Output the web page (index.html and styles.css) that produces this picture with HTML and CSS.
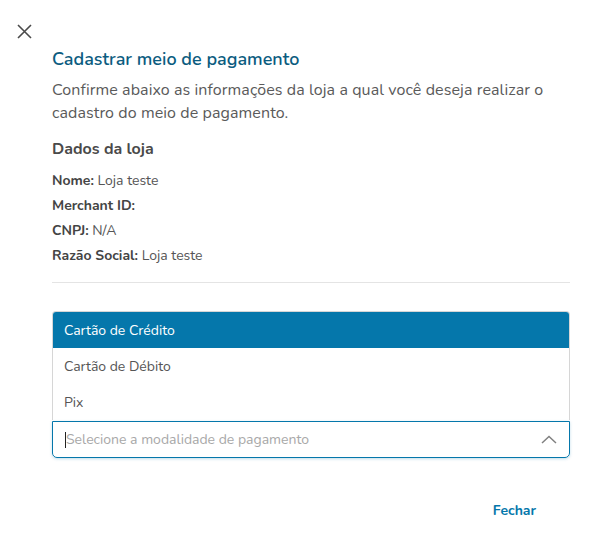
FILE: index.html
```html
<!DOCTYPE html>
<html lang="pt-BR">
<head>
<meta charset="utf-8">
<link rel="stylesheet" href="styles.css">
</head>
<body>
<div class="dialog">
  <button class="close" aria-label="Fechar">
    <svg width="15" height="15" viewBox="0 0 15 15"><path d="M1 1L14 14M14 1L1 14" stroke="#4a4a4a" stroke-width="1.6" fill="none"/></svg>
  </button>
  <div class="content">
    <h1 class="title">Cadastrar meio de pagamento</h1>
    <p class="desc">Confirme abaixo as informações da loja a qual você deseja realizar o cadastro do meio de pagamento.</p>
    <h2 class="subtitle">Dados da loja</h2>
    <ul class="fields">
      <li><b>Nome:</b> Loja teste</li>
      <li><b>Merchant ID:</b></li>
      <li><b>CNPJ:</b> N/A</li>
      <li><b>Razão Social:</b> Loja teste</li>
    </ul>
    <hr class="divider">
    <div class="select">
      <ul class="options">
        <li class="option active">Cartão de Crédito</li>
        <li class="option">Cartão de Débito</li>
        <li class="option">Pix</li>
      </ul>
      <div class="input">
        <span class="caret"></span><span class="placeholder">Selecione a modalidade de pagamento</span>
        <svg class="chevron" width="16" height="9" viewBox="0 0 16 9"><path d="M1 8L8 1.5L15 8" stroke="#808080" stroke-width="1.5" fill="none"/></svg>
      </div>
    </div>
    <div class="actions">
      <button class="btn-close">Fechar</button>
    </div>
  </div>
</div>
</body>
</html>
```
FILE: styles.css
```css
* { box-sizing: border-box; }
body {
  margin: 0;
  background: #fff;
  font-family: "Nunito", "Lato", "Open Sans", sans-serif;
  color: #555;
}
.dialog {
  padding-top: 24px;
}
.close {
  display: block;
  margin-left: 17px;
  padding: 0;
  border: 0;
  background: none;
  width: 15px;
  height: 15px;
  line-height: 0;
}
.content {
  padding: 0 39px 0 52px;
}
.title {
  margin: 8px 0 0;
  font-size: 18px;
  line-height: 24px;
  font-weight: 600;
  color: #0b5c80;
}
.desc {
  margin: 8px 0 0;
  font-size: 16px;
  line-height: 23px;
  letter-spacing: 0.09px;
  color: #5a5a5a;
}
.subtitle {
  margin: 12px 0 0;
  font-size: 16px;
  line-height: 24px;
  font-weight: 700;
  color: #4a4a4a;
}
.fields {
  list-style: none;
  margin: 6.5px 0 0;
  padding: 0;
  font-size: 14px;
  line-height: 25px;
  color: #555;
}
.fields b {
  font-weight: 700;
  color: #444;
}
.divider {
  margin: 14px 0 0;
  border: 0;
  border-top: 1px solid #e4e4e4;
  height: 0;
}
.select {
  margin-top: 28px;
}
.options {
  list-style: none;
  margin: 0;
  padding: 0;
  border: 1px solid #d6d6d6;
  border-bottom: 0;
  border-radius: 4px 4px 0 0;
  overflow: hidden;
}
.option {
  height: 36px;
  line-height: 36px;
  padding: 1px 0 0 11px;
  font-size: 14px;
  color: #555;
}
.option.active {
  background: #0577ab;
  color: #fff;
}
.input {
  display: flex;
  align-items: center;
  height: 37px;
  margin-top: 1px;
  border: 1px solid #0577ab;
  border-radius: 0 0 5px 5px;
  padding: 1px 12px 0 12px;
  box-shadow: 0 1px 3px rgba(5, 119, 171, 0.25);
}
.caret {
  width: 1px;
  height: 16px;
  background: #222;
}
.placeholder {
  flex: 1;
  font-size: 14px;
  color: #a8a8a8;
}
.actions {
  display: flex;
  justify-content: flex-end;
  margin-top: 43px;
  padding-right: 34px;
}
.btn-close {
  border: 0;
  background: none;
  padding: 0;
  font-family: inherit;
  font-size: 14px;
  font-weight: 700;
  line-height: 20px;
  color: #0577ab;
}
```
